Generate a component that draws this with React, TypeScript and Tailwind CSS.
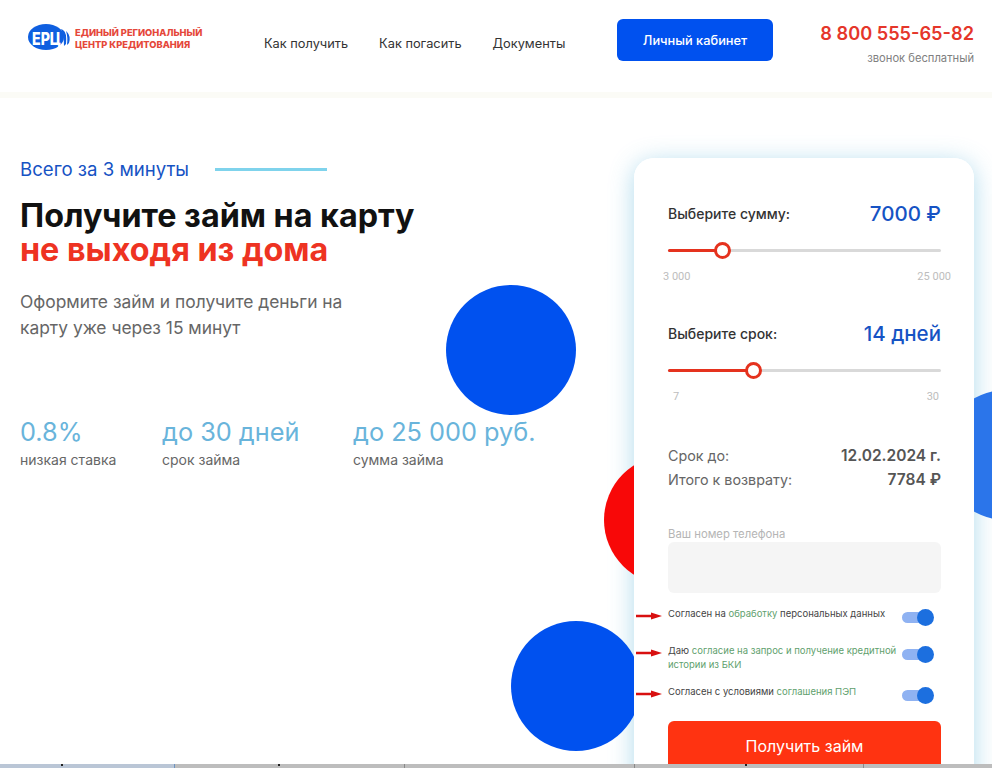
const font = "font-['Inter','Noto_Sans',sans-serif]";

const stats = [
  { value: "0.8%", label: "низкая ставка", width: "w-[142px]" },
  { value: "до 30 дней", label: "срок займа", width: "w-[191px]" },
  { value: "до 25 000 руб.", label: "сумма займа", width: "" },
];

function Logo() {
  return (
    <svg width="44" height="28" viewBox="0 0 44 28" className="shrink-0">
      <ellipse cx="18" cy="13" rx="18" ry="13" fill="#0f5fe0" />
      <path d="M35 6 Q39 8 38 20 L36 22 Q36 12 33 5Z M39 8 Q43 12 41 19 L39 21 Q40 13 38 7Z" fill="#0f5fe0" />
      <text x="4" y="21" fill="#ffffff" fontSize="17" fontWeight="800" fontFamily="Inter, sans-serif" textLength="29" lengthAdjust="spacingAndGlyphs">
        ЕРЦ
      </text>
    </svg>
  );
}

function Arrow() {
  return (
    <svg width="26" height="8" viewBox="0 0 26 8" className="absolute left-[-32px] top-[5px]">
      <path d="M0 2.8H15V0.4L26 4L15 7.6V5.2H0Z" fill="#d81010" />
    </svg>
  );
}

function Slider({ label, value, percent, min, max, minClass, maxClass }: { label: string; value: string; percent: number; min: string; max: string; minClass: string; maxClass: string }) {
  return (
    <div>
      <div className="flex items-center justify-between h-[30px]">
        <span className="text-[14px] font-medium text-[#333]">{label}</span>
        <span className="pt-[2px] text-[20.5px] font-medium text-[#1653c4]">{value}</span>
      </div>
      <div className="relative mt-[21px] h-[3px] rounded-full bg-[#d9d9d9]">
        <div className="h-full rounded-full bg-[#e5321e]" style={{ width: `${percent}%` }} />
        <div
          className="absolute top-[-7px] ml-[-8px] h-[17px] w-[17px] rounded-full border-[3px] border-[#e5321e] bg-white"
          style={{ left: `${percent}%` }}
        />
      </div>
      <div className="mt-[17px] flex justify-between font-['Roboto',sans-serif] text-[11px] leading-[16px] text-[#bdbdbd]">
        <span className={minClass}>{min}</span>
        <span className={maxClass}>{max}</span>
      </div>
    </div>
  );
}

function Consent({ children, className }: { children: React.ReactNode; className: string }) {
  return (
    <div className={`relative flex justify-between ${className}`}>
      <Arrow />
      <p className="w-[232px] text-[9.5px] leading-[14px] text-[#444]">{children}</p>
      <div className="relative mr-[8px] mt-[5px] h-[11px] w-[31px] rounded-full bg-[#8fb2f2]">
        <div className="absolute right-[-1px] top-[-3px] h-[17px] w-[17px] rounded-full bg-[#1c6fdf]" />
      </div>
    </div>
  );
}

export default function App() {
  return (
    <div className={`relative h-[768px] w-[992px] overflow-hidden bg-white ${font}`}>
      <header className="box-content flex h-[80px] items-center border-b-[6px] border-[#fbfbf6] pb-[12px] pl-[28px] pr-[18px]">
        <div className="flex w-[236px] items-center gap-[4px] pb-[4px]">
          <Logo />
          <div className="ml-[-1px] pt-[2px] text-[9.3px] font-extrabold leading-[12px] text-[#e5473a]">
            <div>ЕДИНЫЙ РЕГИОНАЛЬНЫЙ</div>
            <div>ЦЕНТР КРЕДИТОВАНИЯ</div>
          </div>
        </div>
        <nav className="flex w-[353px] gap-[31px] pt-[8px] text-[12.8px] text-[#333]">
          <span>Как получить</span>
          <span>Как погасить</span>
          <span>Документы</span>
        </nav>
        <button className="h-[42px] w-[156px] rounded-[6px] bg-[#0051ef] pt-[2px] text-[12.8px] font-medium text-white">Личный кабинет</button>
        <div className="ml-auto pt-[6px] text-right">
          <div className="text-[18.2px] font-semibold leading-[26px] text-[#e5362a]">8 800 555-65-82</div>
          <div className="mt-[4px] text-[11.2px] leading-[16px] text-[#808080]">звонок бесплатный</div>
        </div>
      </header>

      <div className="absolute left-[634px] top-[158px] h-[680px] w-[340px] rounded-[20px] shadow-[0_4px_24px_rgba(80,175,215,0.45)]" />
      <div className="absolute left-[446px] top-[285px] h-[130px] w-[130px] rounded-full bg-[#0051ef]" />
      <div className="absolute left-[604px] top-[455px] h-[130px] w-[130px] rounded-full bg-[#f80808]" />
      <div className="absolute left-[511px] top-[621px] h-[130px] w-[130px] rounded-full bg-[#0051ef]" />
      <div className="absolute left-[941px] top-[390px] h-[130px] w-[130px] rounded-full bg-[#2b75ea]" />

      <main className="relative flex justify-between pl-[20px] pr-[18px] pt-[60px]">
        <section>
          <div className="flex items-center gap-[26px] text-[18.6px] leading-[22px] text-[#1653c4]">
            <span>Всего за 3 минуты</span>
            <span className="h-[3px] w-[112px] bg-[#7fd3ec]" />
          </div>
          <h1 className="mt-[19px] text-[32.3px] font-bold leading-[34px] text-[#111]">
            Получите займ на карту
            <br />
            <span className="text-[#ee3322]">не выходя из дома</span>
          </h1>
          <p className="mt-[22px] text-[17.4px] leading-[26px] text-[#666]">
            Оформите займ и получите деньги на
            <br />
            карту уже через 15 минут
          </p>
          <div className="mt-[75px] flex">
            {stats.map((s) => (
              <div key={s.label} className={s.width}>
                <div className="text-[25.3px] leading-[32px] text-[#69b4db]">{s.value}</div>
                <div className="mt-[2px] text-[14px] leading-[20px] text-[#666]">{s.label}</div>
              </div>
            ))}
          </div>
        </section>

        <section className="h-[680px] w-[340px] rounded-[20px] bg-white pl-[34px] pr-[33px] pt-[40px]">
          <Slider label="Выберите сумму:" value="7000 ₽" percent={19.8} min="3 000" max="25 000" minClass="ml-[-5px]" maxClass="mr-[-10px]" />
          <div className="mt-[33px]">
            <Slider label="Выберите срок:" value="14 дней" percent={31.3} min="7" max="30" minClass="ml-[5px]" maxClass="mr-[2px]" />
          </div>
          <div className="mt-[39px] text-[14.3px] leading-[24px] text-[#666]">
            <div className="flex justify-between">
              <span>Срок до:</span>
              <span className="text-[15.5px] font-semibold text-[#555]">12.02.2024 г.</span>
            </div>
            <div className="flex justify-between">
              <span>Итого к возврату:</span>
              <span className="text-[15.5px] font-semibold text-[#555]">7784 ₽</span>
            </div>
          </div>
          <label className="mt-[34px] block text-[11.3px] leading-[16px] text-[#b5b5b5]">Ваш номер телефона</label>
          <div className="h-[51px] rounded-[6px] bg-[#f5f5f5]" />
          <div className="mt-[14px]">
            <Consent className="h-[37px]">
              Согласен на <span className="text-[#5f9f6e]">обработку</span> персональных данных
            </Consent>
            <Consent className="h-[41px]">
              Даю <span className="text-[#5f9f6e]">согласие на запрос и получение кредитной истории из БКИ</span>
            </Consent>
            <Consent className="h-[36px]">
              Согласен с условиями <span className="text-[#5f9f6e]">соглашения ПЭП</span>
            </Consent>
          </div>
          <button className="h-[50px] w-full rounded-[6px] bg-[#ff3311] text-[16px] text-white">Получить займ</button>
        </section>
      </main>

      <div className="absolute bottom-0 left-0 flex h-[4px] w-full bg-[#bdbdbd]">
        <div className="w-[175px] border-r border-[#6f94c0] bg-[#bac6d6]" />
        <div className="w-[230px] border-r border-[#8a8a8a]" />
        <div className="w-[230px] border-r border-[#8a8a8a]" />
        <div className="w-[229px] border-r border-[#8a8a8a]" />
        <span className="absolute left-[61px] top-0 h-[2px] w-[2px] bg-[#222]" />
        <span className="absolute left-[278px] top-0 h-[2px] w-[2px] bg-[#222]" />
        <span className="absolute left-[745px] top-0 h-[2px] w-[2px] bg-[#222]" />
      </div>
    </div>
  );
}
